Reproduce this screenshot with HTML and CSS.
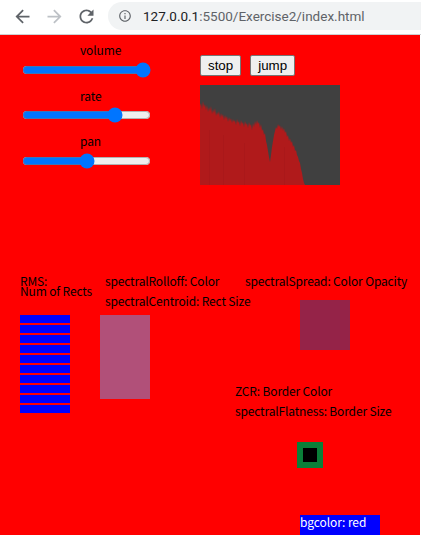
FILE: index.html
```html
<!DOCTYPE html>
<html lang="en">
<head>
<meta charset="utf-8">
<title>Exercise2</title>
<link rel="stylesheet" href="styles.css">
</head>
<body>
<header class="browser-bar">
  <nav class="nav">
    <span class="nav-btn">
      <svg class="nav-icon" viewBox="0 0 24 24" width="21" height="21"><path fill="#5f6368" d="M20 11H7.83l5.59-5.59L12 4l-8 8 8 8 1.41-1.41L7.83 13H20v-2z"/></svg>
    </span>
    <span class="nav-btn">
      <svg class="nav-icon" viewBox="0 0 24 24" width="21" height="21"><path fill="#bdc1c6" d="M4 11h12.17l-5.59-5.59L12 4l8 8-8 8-1.41-1.41L16.17 13H4v-2z"/></svg>
    </span>
    <span class="nav-btn">
      <svg class="nav-icon" viewBox="0 0 24 24" width="21" height="21"><path fill="#5f6368" d="M17.65 6.35C16.2 4.9 14.21 4 12 4c-4.42 0-7.99 3.58-7.99 8s3.57 8 7.99 8c3.73 0 6.84-2.55 7.73-6h-2.08c-.82 2.33-3.04 4-5.65 4-3.31 0-6-2.69-6-6s2.69-6 6-6c1.66 0 3.14.69 4.22 1.78L13 11h7V4l-2.35 2.35z"/></svg>
    </span>
  </nav>
  <div class="omnibox">
    <svg class="info-icon" viewBox="0 0 24 24" width="14" height="14"><path fill="#5f6368" d="M11 7h2v2h-2zm0 4h2v6h-2zm1-9C6.48 2 2 6.48 2 12s4.48 10 10 10 10-4.48 10-10S17.52 2 12 2zm0 18c-4.41 0-8-3.59-8-8s3.59-8 8-8 8 3.59 8 8-3.59 8-8 8z"/></svg>
    <span class="url"><span class="host">127.0.0.1</span><span class="path">:5500/Exercise2/index.html</span></span>
  </div>
</header>

<main class="stage">
  <section class="controls">
    <div class="sliders">
      <label class="slider-group">
        <span class="slider-label">volume</span>
        <input class="slider" type="range" min="0" max="100" value="100">
      </label>
      <label class="slider-group">
        <span class="slider-label">rate</span>
        <input class="slider" type="range" min="0" max="100" value="75">
      </label>
      <label class="slider-group">
        <span class="slider-label">pan</span>
        <input class="slider" type="range" min="0" max="100" value="50">
      </label>
    </div>
    <div class="player">
      <div class="buttons">
        <button class="btn" type="button">stop</button>
        <button class="btn" type="button">jump</button>
      </div>
      <svg class="spectrum" viewBox="0 0 140 100" width="140" height="100">
        <rect width="140" height="100" fill="#404040"/>
        <polygon fill="#b01a1b" points="0,100 0,21 1,18 2,24 3,16 4,22 5,19 6,25 7,20 8,27 9,22 10,26 11,21 12,29 13,24 14,28 15,23 16,31 17,27 18,30 19,26 20,33 21,28 22,32 23,29 24,35 25,30 26,34 27,31 28,37 29,32 30,36 31,33 32,38 33,34 34,37 35,35 36,40 37,34 38,38 39,36 40,41 41,35 42,39 43,37 44,42 45,36 46,40 47,38 48,43 49,37 50,41 51,39 52,45 53,38 54,42 55,36 56,40 57,35 58,39 59,37 60,43 61,39 62,46 63,44 64,50 65,48 66,56 67,60 68,66 69,72 70,77 71,70 72,62 73,56 74,50 75,46 76,42 77,44 78,39 79,42 80,40 81,45 82,41 83,46 84,43 85,48 86,46 87,52 88,50 89,56 90,53 91,58 92,56 93,62 94,60 95,66 96,65 97,70 98,72 99,76 100,78 101,84 102,88 103,94 104,98 105,100"/>
        <g stroke="#9c1618" stroke-width="1" opacity="0.25">
          <line x1="9.5" y1="45" x2="9.5" y2="100"/>
          <line x1="23.5" y1="50" x2="23.5" y2="100"/>
          <line x1="44.5" y1="58" x2="44.5" y2="100"/>
          <line x1="84.5" y1="62" x2="84.5" y2="100"/>
        </g>
      </svg>
    </div>
  </section>

  <section class="viz">
    <p class="label rms">RMS:<br>Num of Rects</p>
    <p class="label rolloff">spectralRolloff: Color</p>
    <p class="label centroid">spectralCentroid: Rect Size</p>
    <p class="label spread">spectralSpread: Color Opacity</p>
    <p class="label zcr">ZCR: Border Color</p>
    <p class="label flatness">spectralFlatness: Border Size</p>

    <div class="rms-bars">
      <span class="bar"></span><span class="bar"></span><span class="bar"></span><span class="bar"></span><span class="bar"></span>
      <span class="bar"></span><span class="bar"></span><span class="bar"></span><span class="bar"></span><span class="bar"></span>
    </div>
    <div class="centroid-rect"></div>
    <div class="spread-rect"></div>
    <div class="zcr-box"></div>
    <div class="bg-tag">bgcolor: red</div>
  </section>
</main>
</body>
</html>
```

FILE: styles.css
```css
html, body {
  margin: 0;
  padding: 0;
  background: #ffffff;
}

body {
  font-family: "Noto Sans CJK KR", "Noto Sans", sans-serif;
}

/* ---------- browser toolbar ---------- */
.browser-bar {
  width: 421px;
  height: 35px;
  border-bottom: 1px solid #cfd0d2;
  background: #ffffff;
  display: flex;
  align-items: flex-start;
  padding-top: 2px;
  box-sizing: border-box;
  overflow: hidden;
}

.nav {
  display: flex;
  padding-left: 6px;
}

.nav-btn {
  width: 32px;
  height: 28px;
  display: flex;
  align-items: center;
  justify-content: center;
}

.nav-icon {
  display: block;
}

.omnibox {
  margin-left: 6px;
  flex: none;
  width: 340px;
  height: 28px;
  border-radius: 14px;
  background: #f1f3f4;
  display: flex;
  align-items: center;
  padding-left: 10px;
  box-sizing: border-box;
}

.info-icon {
  display: block;
  flex: none;
}

.url {
  margin-left: 11px;
  font-family: Roboto, "Liberation Sans", sans-serif;
  font-size: 13.5px;
  white-space: nowrap;
}

.host {
  color: #202124;
}

.path {
  color: #5f6368;
}

/* ---------- sketch stage ---------- */
.stage {
  position: relative;
  width: 420px;
  height: 500px;
  background: #ff0000;
  overflow: hidden;
}

.controls {
  display: flex;
  align-items: flex-start;
  padding-left: 22px;
}

.sliders {
  display: flex;
  flex-direction: column;
  gap: 10px;
  padding-top: 7px;
  width: 129px;
}

.slider-group {
  display: flex;
  flex-direction: column;
  gap: 3.5px;
}

.slider-label {
  padding-left: 58px;
  font-size: 12px;
  letter-spacing: -0.1px;
  line-height: 16px;
  color: #000;
}

.slider {
  width: 129px;
  height: 16px;
  margin: 0;
  display: block;
}

.player {
  margin-left: 49px;
  padding-top: 20px;
  display: flex;
  flex-direction: column;
  gap: 9px;
}

.buttons {
  display: flex;
  gap: 9px;
}

.btn {
  font-family: "Liberation Sans", Arial, sans-serif;
  font-size: 13.333px;
  height: 21px;
  padding: 1px 7px;
  margin: 0;
  color: #000;
  background: #efefef;
  border: 1px solid #767676;
  border-radius: 2px;
  box-sizing: border-box;
}

.spectrum {
  display: block;
}

/* ---------- drawn visualisation (free canvas) ---------- */
.viz {
  position: absolute;
  inset: 0;
}

.label {
  position: absolute;
  margin: 0;
  font-size: 12px;
  letter-spacing: -0.15px;
  line-height: 16px;
  color: #000;
  white-space: nowrap;
}

.rms {
  left: 20px;
  top: 241px;
  line-height: 10px;
}

.rolloff {
  left: 105px;
  top: 238px;
}

.centroid {
  left: 105px;
  top: 258px;
}

.spread {
  left: 245px;
  top: 238px;
}

.zcr {
  left: 235px;
  top: 348px;
}

.flatness {
  left: 235px;
  top: 368px;
}

.rms-bars {
  position: absolute;
  left: 20px;
  top: 280px;
  display: flex;
  flex-direction: column;
  gap: 2px;
}

.bar {
  display: block;
  width: 50px;
  height: 8px;
  background: #0000ff;
}

.centroid-rect {
  position: absolute;
  left: 100px;
  top: 280px;
  width: 50px;
  height: 84px;
  background: #b15079;
}

.spread-rect {
  position: absolute;
  left: 300px;
  top: 265px;
  width: 50px;
  height: 50px;
  background: #952348;
}

.zcr-box {
  position: absolute;
  left: 297px;
  top: 407px;
  width: 26px;
  height: 26px;
  box-sizing: border-box;
  border: 6px solid #0a8038;
  background: #000;
}

.bg-tag {
  position: absolute;
  left: 300px;
  top: 480px;
  width: 80px;
  height: 20px;
  background: #0000ff;
  color: #ffffff;
  font-size: 12px;
  letter-spacing: -0.1px;
  line-height: 13px;
}
```
